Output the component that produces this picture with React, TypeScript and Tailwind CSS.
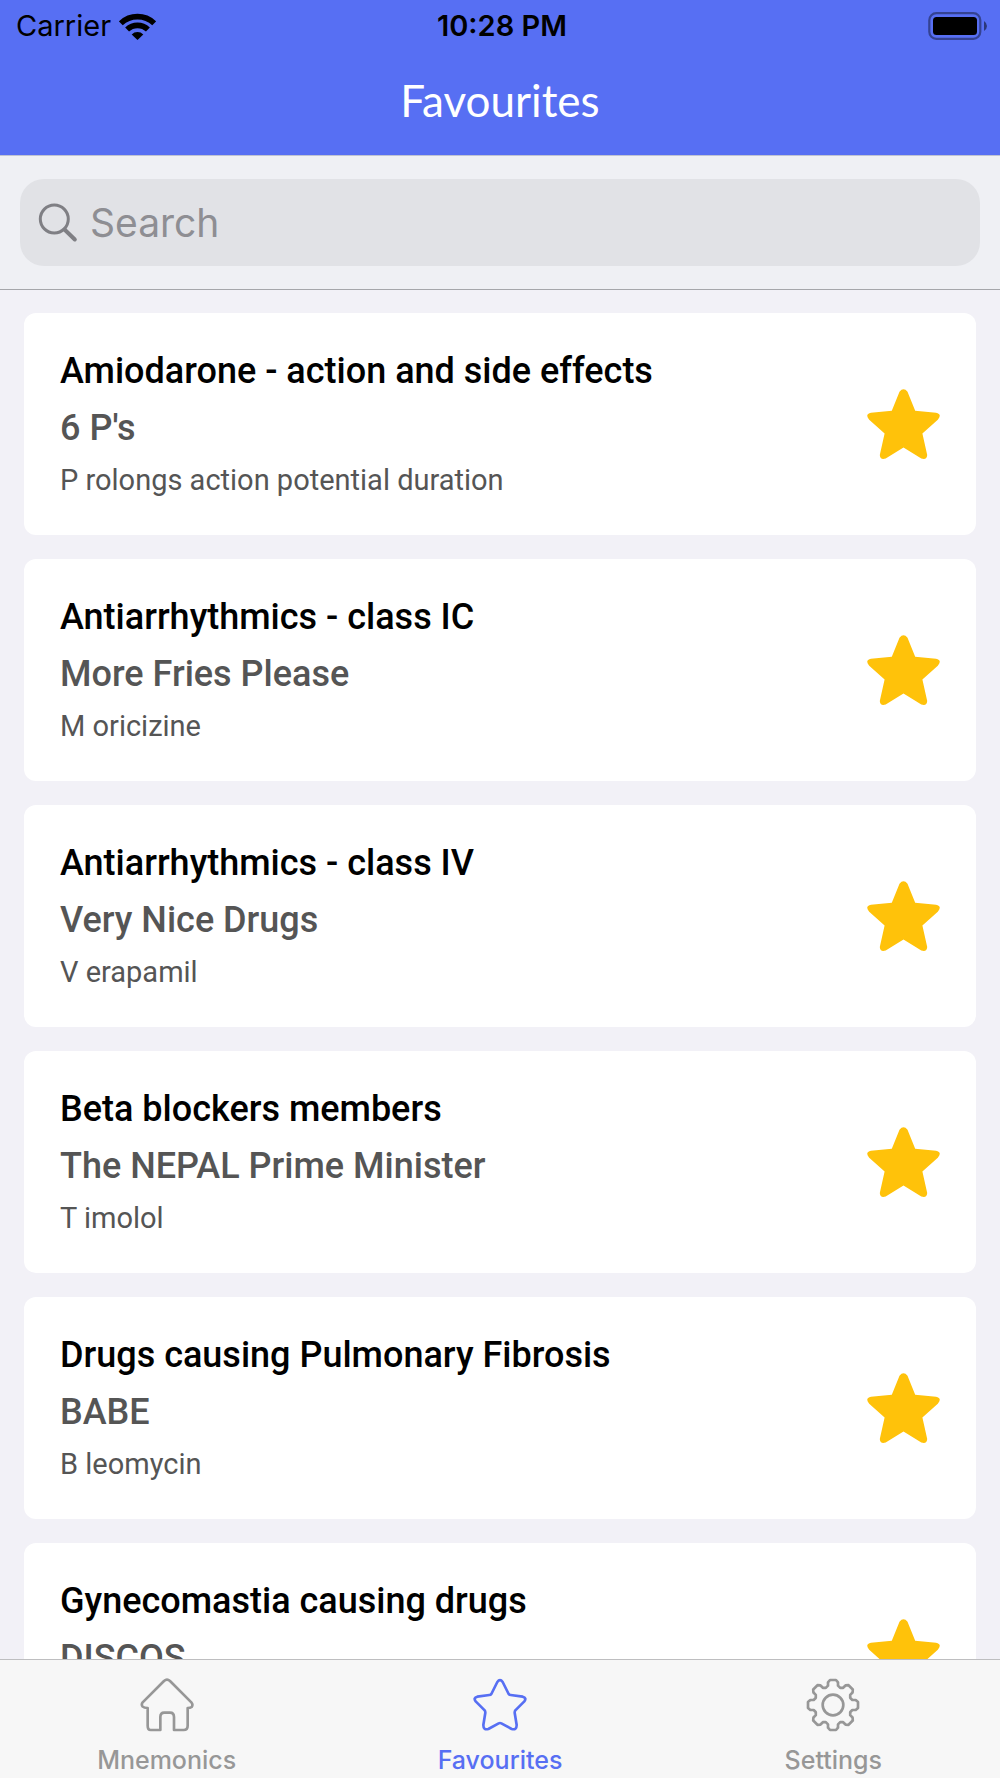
import React from 'react';

const mnemonics = [
  { title: 'Amiodarone - action and side effects', phrase: "6 P's", first: 'P rolongs action potential duration' },
  { title: 'Antiarrhythmics - class IC', phrase: 'More Fries Please', first: 'M oricizine' },
  { title: 'Antiarrhythmics - class IV', phrase: 'Very Nice Drugs', first: 'V erapamil' },
  { title: 'Beta blockers members', phrase: 'The NEPAL Prime Minister', first: 'T imolol' },
  { title: 'Drugs causing Pulmonary Fibrosis', phrase: 'BABE', first: 'B leomycin' },
  { title: 'Gynecomastia causing drugs', phrase: 'DISCOS', first: '' },
];

const WifiIcon = () => (
  <svg width="37" height="27" viewBox="0 0 37 27" fill="none" stroke="#000" strokeWidth="5.6" aria-hidden="true">
    <path d="M1.8 10.3a24.1 24.1 0 0 1 33.4 0" />
    <path d="M8.1 16.6a15 15 0 0 1 20.8 0" />
    <path d="M18.5 27l-5.8-5.6a8.4 8.4 0 0 1 11.6 0z" fill="#000" stroke="none" />
  </svg>
);

const BatteryIcon = () => (
  <svg width="60" height="28" viewBox="0 0 60 28" aria-hidden="true">
    <rect x="1.3" y="1.2" width="51" height="25.6" rx="7" fill="none" stroke="#000" strokeOpacity="0.4" strokeWidth="2.2" />
    <rect x="5" y="5" width="44" height="18" rx="3.5" />
    <path d="M56 9v10q3-2 3-5t-3-5z" fillOpacity="0.5" />
  </svg>
);

const SearchIcon = () => (
  <svg width="40" height="40" viewBox="0 0 40 40" fill="none" stroke="#7f7f84" aria-hidden="true">
    <circle cx="16.3" cy="16" r="14" strokeWidth="3" />
    <path d="M26.5 26.5l10.3 10" strokeWidth="4" strokeLinecap="round" />
  </svg>
);

const FilledStar = () => (
  <svg width="73" height="71" viewBox="0 0 73 71" fill="#ffc20a" aria-hidden="true">
    <path d="M32.5 2.7Q36.5-2 40.5 2.7L48.2 21.8 69 23.7Q75.5 25.3 70.8 30.7L55.4 44.6 60.2 66Q59.8 71.3 54.3 69.5L36.5 58.5 18.7 69.5Q13.2 71.3 12.8 66L17.6 44.6 2.2 30.7Q-2.5 25.3 4 23.7L24.8 21.8z" />
  </svg>
);

const HomeIcon = () => (
  <svg width="54" height="54" viewBox="0 0 162 162" fill="none" stroke="currentColor" strokeWidth="8" strokeLinejoin="round" aria-hidden="true">
    <path d="M72 9Q81 1 90 9L154 73Q160 80 155 87 151 90 143 90V143Q143 156 131 156H102V117Q102 104 90 104H73Q61 104 61 117V156H32Q23 156 23 143V90Q12 90 8 86 3 80 8 73z" />
  </svg>
);

const StarIcon = () => (
  <svg width="54" height="54" viewBox="0 0 162 162" fill="none" stroke="currentColor" strokeWidth="8" strokeLinejoin="round" aria-hidden="true">
    <path d="M73 12Q81 1 89 12L107 48Q109 51 113 51L149 56Q162 60 154 70L127 97Q125 100 125 104L131 141Q131 157 116 153L85 136Q81 134 77 136L46 153Q31 157 31 141L37 104Q37 100 35 97L8 70Q0 60 13 56L49 51Q53 51 55 48z" />
  </svg>
);

const GearIcon = () => {
  // one tooth, turned eight times around the hub
  const tooth = [[-21, -52], [-15, -58], [-15, -68], [-9, -75], [9, -75], [15, -68], [15, -58], [21, -52]];
  const points = [...Array(8).keys()].flatMap((i) => {
    const a = (i * Math.PI) / 4;
    return tooth.map(([x, y]) => `${x * Math.cos(a) - y * Math.sin(a)},${x * Math.sin(a) + y * Math.cos(a)}`);
  });

  return (
    <svg width="54" height="54" viewBox="-81 -81 162 162" fill="none" stroke="currentColor" strokeWidth="8" strokeLinejoin="round" aria-hidden="true">
      <polygon points={points.join(' ')} />
      <circle r="31" />
    </svg>
  );
};

const tabs = [
  { label: 'Mnemonics', icon: HomeIcon, active: false },
  { label: 'Favourites', icon: StarIcon, active: true },
  { label: 'Settings', icon: GearIcon, active: false },
];

const Header = () => (
  <header className="border-b border-[#bfc3d3] bg-[#576ff3]">
    <div className="grid h-12 grid-cols-3 items-center pl-4 pr-3 pt-1 text-[29px] leading-8 text-black">
      <div className="flex items-center gap-2">
        <span>Carrier</span>
        <WifiIcon />
      </div>
      <span className="text-center font-semibold">10:28 PM</span>
      <div className="flex justify-end">
        <BatteryIcon />
      </div>
    </div>
    <h1 className="flex h-[107px] items-center justify-center pb-1 font-['Lato',sans-serif] text-[44px] leading-none text-white">
      Favourites
    </h1>
  </header>
);

const SearchBar = () => (
  <div className="border-b border-[#a5a6aa] bg-[#eff0f4] px-5 py-[23px]">
    <label className="flex h-[87px] items-center gap-3 rounded-3xl bg-[#e1e2e6] px-[18px]">
      <SearchIcon />
      <input
        type="search"
        aria-label="Search"
        placeholder="Search"
        className="min-w-0 flex-1 bg-transparent text-[39px] leading-[48px] outline-none placeholder:text-[#8e8e93]"
      />
    </label>
  </div>
);

const MnemonicCard = ({ title, phrase, first }: { title: string; phrase: string; first: string }) => (
  <li className="flex items-center justify-between rounded-xl bg-white px-9 py-8 font-['Roboto',sans-serif] text-[#555]">
    <div>
      <h2 className="text-[36px] font-medium leading-[53px] text-black">{title}</h2>
      <p className="text-[36px] font-medium leading-[60px]">{phrase}</p>
      <p className="min-h-[45px] text-[29px] leading-[45px]">{first}</p>
    </div>
    <button type="button" aria-label="Remove from favourites">
      <FilledStar />
    </button>
  </li>
);

const TabBar = () => (
  <nav className="grid grid-cols-3 border-t border-[#bebec0] bg-[#f7f7f7]">
    {tabs.map(({ label, icon: Icon, active }) => (
      <a
        key={label}
        href="#"
        aria-current={active ? 'page' : undefined}
        className={`flex h-[118px] flex-col items-center gap-3 pt-[18px] text-[25px] font-medium leading-8 ${active ? 'text-[#576ff3]' : 'text-[#979797]'}`}
      >
        <Icon />
        {label}
      </a>
    ))}
  </nav>
);

const App = () => {
  return (
    <div className="flex h-screen flex-col bg-[#f2f1f7] font-['Inter',sans-serif]">
      <Header />
      <SearchBar />
      <main className="min-h-0 flex-1 overflow-y-auto px-6 py-[23px] [scrollbar-width:none]">
        <ul className="flex flex-col gap-6">
          {mnemonics.map((item) => (
            <MnemonicCard key={item.title} {...item} />
          ))}
        </ul>
      </main>
      <TabBar />
    </div>
  );
};

export default App;
